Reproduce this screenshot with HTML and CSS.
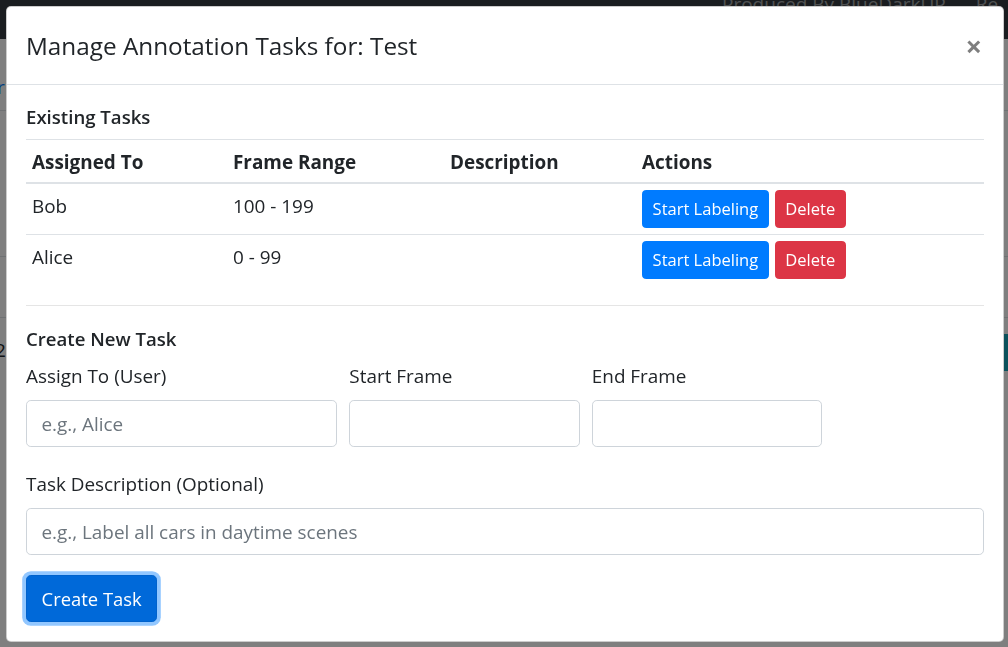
FILE: index.html
```html
<!DOCTYPE html>
<html lang="en">
<head>
<meta charset="utf-8">
<title>Manage Annotation Tasks</title>
<link rel="stylesheet" href="styles.css">
</head>
<body>
<div class="page">
  <nav class="navbar">
    <span class="nav-text">Produced By BlueDarkUP</span>
    <span class="nav-text nav-re">Re</span>
  </nav>
  <div class="page-row r1"><span class="crumb">r</span></div>
  <div class="page-row r2"></div>
  <div class="page-row r3"></div>
  <div class="page-row r4"><span class="num">2</span><span class="teal-btn"></span></div>
</div>
<div class="backdrop"></div>
<div class="modal">
  <div class="modal-header">
    <h5 class="modal-title">Manage Annotation Tasks for: Test</h5>
    <button class="close" type="button">×</button>
  </div>
  <div class="modal-body">
    <h6 class="section-title">Existing Tasks</h6>
    <table class="table">
      <colgroup><col class="c1"><col class="c2"><col class="c3"><col class="c4"></colgroup>
      <thead>
        <tr><th>Assigned To</th><th>Frame Range</th><th>Description</th><th>Actions</th></tr>
      </thead>
      <tbody>
        <tr>
          <td>Bob</td><td>100 - 199</td><td></td>
          <td><div class="actions"><button class="btn btn-sm btn-primary" type="button">Start Labeling</button><button class="btn btn-sm btn-danger" type="button">Delete</button></div></td>
        </tr>
        <tr>
          <td>Alice</td><td>0 - 99</td><td></td>
          <td><div class="actions"><button class="btn btn-sm btn-primary" type="button">Start Labeling</button><button class="btn btn-sm btn-danger" type="button">Delete</button></div></td>
        </tr>
      </tbody>
    </table>
    <hr class="divider">
    <h6 class="section-title">Create New Task</h6>
    <div class="form-row">
      <div class="col col-4">
        <label class="label">Assign To (User)</label>
        <input class="form-control" type="text" placeholder="e.g., Alice">
      </div>
      <div class="col col-3">
        <label class="label">Start Frame</label>
        <input class="form-control" type="number">
      </div>
      <div class="col col-3">
        <label class="label">End Frame</label>
        <input class="form-control" type="number">
      </div>
    </div>
    <div class="form-group">
      <label class="label">Task Description (Optional)</label>
      <input class="form-control" type="text" placeholder="e.g., Label all cars in daytime scenes">
    </div>
    <button class="btn btn-create" type="button">Create Task</button>
  </div>
</div>
</body>
</html>
```

FILE: styles.css
```css
* { box-sizing: border-box; }

html, body {
  margin: 0;
  padding: 0;
}

body {
  width: 1008px;
  height: 647px;
  overflow: hidden;
  background: #fff;
  color: #212529;
  font-family: "Open Sans", "Noto Sans", "Liberation Sans", sans-serif;
  font-size: 18.9px;
}

/* ---------- underlying page ---------- */
.page {
  width: 1008px;
}

.navbar {
  height: 39px;
  background: #343a40;
  display: flex;
  align-items: flex-start;
  padding-left: 722px;
  overflow: hidden;
}

.nav-text {
  color: rgba(255, 255, 255, 0.55);
  font-size: 19px;
  line-height: 20px;
  margin-top: -6px;
  white-space: nowrap;
}

.nav-re {
  margin-left: 30px;
}

.page-row {
  border-bottom: 1px solid #dee2e6;
}

.r1 { height: 72px; padding-top: 34px; }
.r2 { height: 146px; }
.r3 { height: 61px; }
.r4 {
  height: 120px;
  display: flex;
  justify-content: space-between;
  align-items: flex-start;
  padding-top: 16px;
  border-bottom: 0;
}

.crumb {
  display: block;
  color: #007bff;
  font-size: 19px;
  line-height: 29px;
  margin-left: -3px;
}

.num {
  font-size: 19px;
  line-height: 29px;
  margin-left: -5px;
  margin-top: 2px;
}

.teal-btn {
  width: 60px;
  height: 37px;
  background: #17a2b8;
  border-radius: 4px;
  margin-right: -20px;
}

/* ---------- backdrop ---------- */
.backdrop {
  position: fixed;
  inset: 0;
  background: rgba(0, 0, 0, 0.5);
}

/* ---------- modal ---------- */
.modal {
  position: absolute;
  top: 6px;
  left: 6px;
  width: 998px;
  background: #fff;
  border: 1px solid rgba(0, 0, 0, 0.2);
  border-radius: 5px;
}

.modal-header {
  display: flex;
  align-items: center;
  justify-content: space-between;
  padding: 20px 19px;
  border-bottom: 1px solid #dee2e6;
}

.modal-title {
  margin: 0;
  font-size: 24.3px;
  font-weight: 500;
  line-height: 37px;
  color: #212529;
}

.close {
  border: 0;
  background: transparent;
  padding: 0;
  margin-right: 2px;
  font-family: "Open Sans", "Liberation Sans", sans-serif;
  font-size: 29px;
  font-weight: 700;
  line-height: 1;
  color: #000;
  opacity: 0.5;
  text-shadow: 0 1px 0 #fff;
}

.modal-body {
  padding: 19px 19px 19px;
}

.section-title {
  margin: 0 0 9px;
  font-size: 18.6px;
  font-weight: 600;
  line-height: 26px;
}

/* ---------- table ---------- */
.table {
  width: 100%;
  border-collapse: collapse;
  table-layout: fixed;
  margin-bottom: 20px;
}

.c1 { width: 201px; }
.c2 { width: 217px; }
.c3 { width: 192px; }

.table th {
  text-align: left;
  font-weight: 700;
  line-height: 29px;
  padding: 7.5px 6px 5.5px;
  border-top: 1px solid #dee2e6;
  border-bottom: 2px solid #dee2e6;
  vertical-align: bottom;
}

.table td {
  padding: 6px 6px;
  line-height: 33px;
  border-top: 1px solid #dee2e6;
  vertical-align: top;
}

.actions {
  display: flex;
  gap: 6px;
}

/* ---------- buttons ---------- */
.btn {
  font-family: inherit;
  color: #fff;
  border: 1px solid transparent;
  cursor: pointer;
  white-space: nowrap;
}

.btn-sm {
  height: 38px;
  padding: 0 9.6px;
  font-size: 16.5px;
  line-height: 36px;
  border-radius: 3.8px;
}

.btn-primary {
  background: #007bff;
  border-color: #007bff;
}

.btn-danger {
  background: #dc3545;
  border-color: #dc3545;
}

.btn-create {
  height: 47px;
  padding: 0 14.6px;
  font-size: 18.4px;
  line-height: 45px;
  border-radius: 4.8px;
  background: #0069d9;
  border-color: #0062cc;
  box-shadow: 0 0 0 3.8px rgba(38, 143, 255, 0.5);
}

/* ---------- form ---------- */
.divider {
  margin: 20px 0;
  border: 0;
  border-top: 1px solid rgba(0, 0, 0, 0.1);
}

.form-row {
  display: flex;
  margin: 0 -6px 22px;
}

.col {
  padding: 0 6px;
}

.col-4 { width: 33.3333%; }
.col-3 { width: 25%; }

.label {
  display: block;
  line-height: 31px;
  margin-bottom: 8px;
}

.form-group {
  margin-bottom: 20px;
}

.form-control {
  display: block;
  width: 100%;
  height: 47px;
  padding: 0 14.4px;
  font-family: inherit;
  font-size: 18.9px;
  color: #495057;
  background: #fff;
  border: 1px solid #ced4da;
  border-radius: 4.8px;
  -moz-appearance: textfield;
}

.form-control::-webkit-outer-spin-button,
.form-control::-webkit-inner-spin-button {
  -webkit-appearance: none;
  margin: 0;
}

.form-control::placeholder {
  color: #6c757d;
}
```
